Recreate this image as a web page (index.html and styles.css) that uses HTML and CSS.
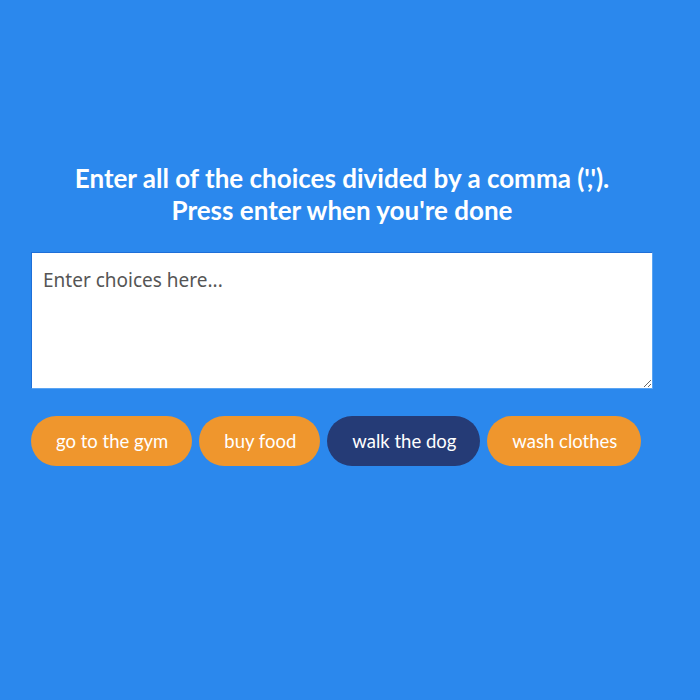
FILE: index.html
```html
<!DOCTYPE html>
<html>
<head>
<meta charset="utf-8">
<link rel="stylesheet" href="styles.css">
</head>
<body>
<main class="app">
  <h1 class="title">Enter all of the choices divided by a comma (',').<br>Press enter when you're done</h1>
  <textarea class="choices" placeholder="Enter choices here..."></textarea>
  <div class="tags">
    <span class="tag">go to the gym</span>
    <span class="tag">buy food</span>
    <span class="tag active">walk the dog</span>
    <span class="tag">wash clothes</span>
  </div>
</main>
</body>
</html>
```
FILE: styles.css
```css
html, body {
  margin: 0;
  padding: 0;
  background: #2b88ed;
  height: 100%;
}
.app {
  width: 622px;
  margin: 0 auto 0 31px;
  padding-top: 162px;
  font-family: "Lato", "Open Sans", sans-serif;
}
.title {
  margin: 0 0 26px;
  color: #fff;
  font-size: 26px;
  line-height: 32px;
  font-weight: 700;
  text-align: center;
}
.choices {
  display: block;
  box-sizing: border-box;
  width: 622px;
  height: 137px;
  margin: 0;
  padding: 14px 11px;
  border: 1px solid #1e6fd8;
  border-bottom-color: #5aa4f3;
  border-right-color: #5aa4f3;
  background: #fff;
  font-family: "Noto Sans", sans-serif;
  font-size: 19px;
  color: #333;
  outline: none;
}
.choices::placeholder {
  color: #555;
}
.tags {
  display: flex;
  gap: 7px;
  margin-top: 27px;
}
.tag {
  display: flex;
  align-items: center;
  height: 50px;
  box-sizing: border-box;
  padding: 0 24px 0 25px;
  border-radius: 25px;
  background: #ef962d;
  color: #fff;
  font-size: 18.5px;
}
.tag.active {
  background: #253b76;
}
```
